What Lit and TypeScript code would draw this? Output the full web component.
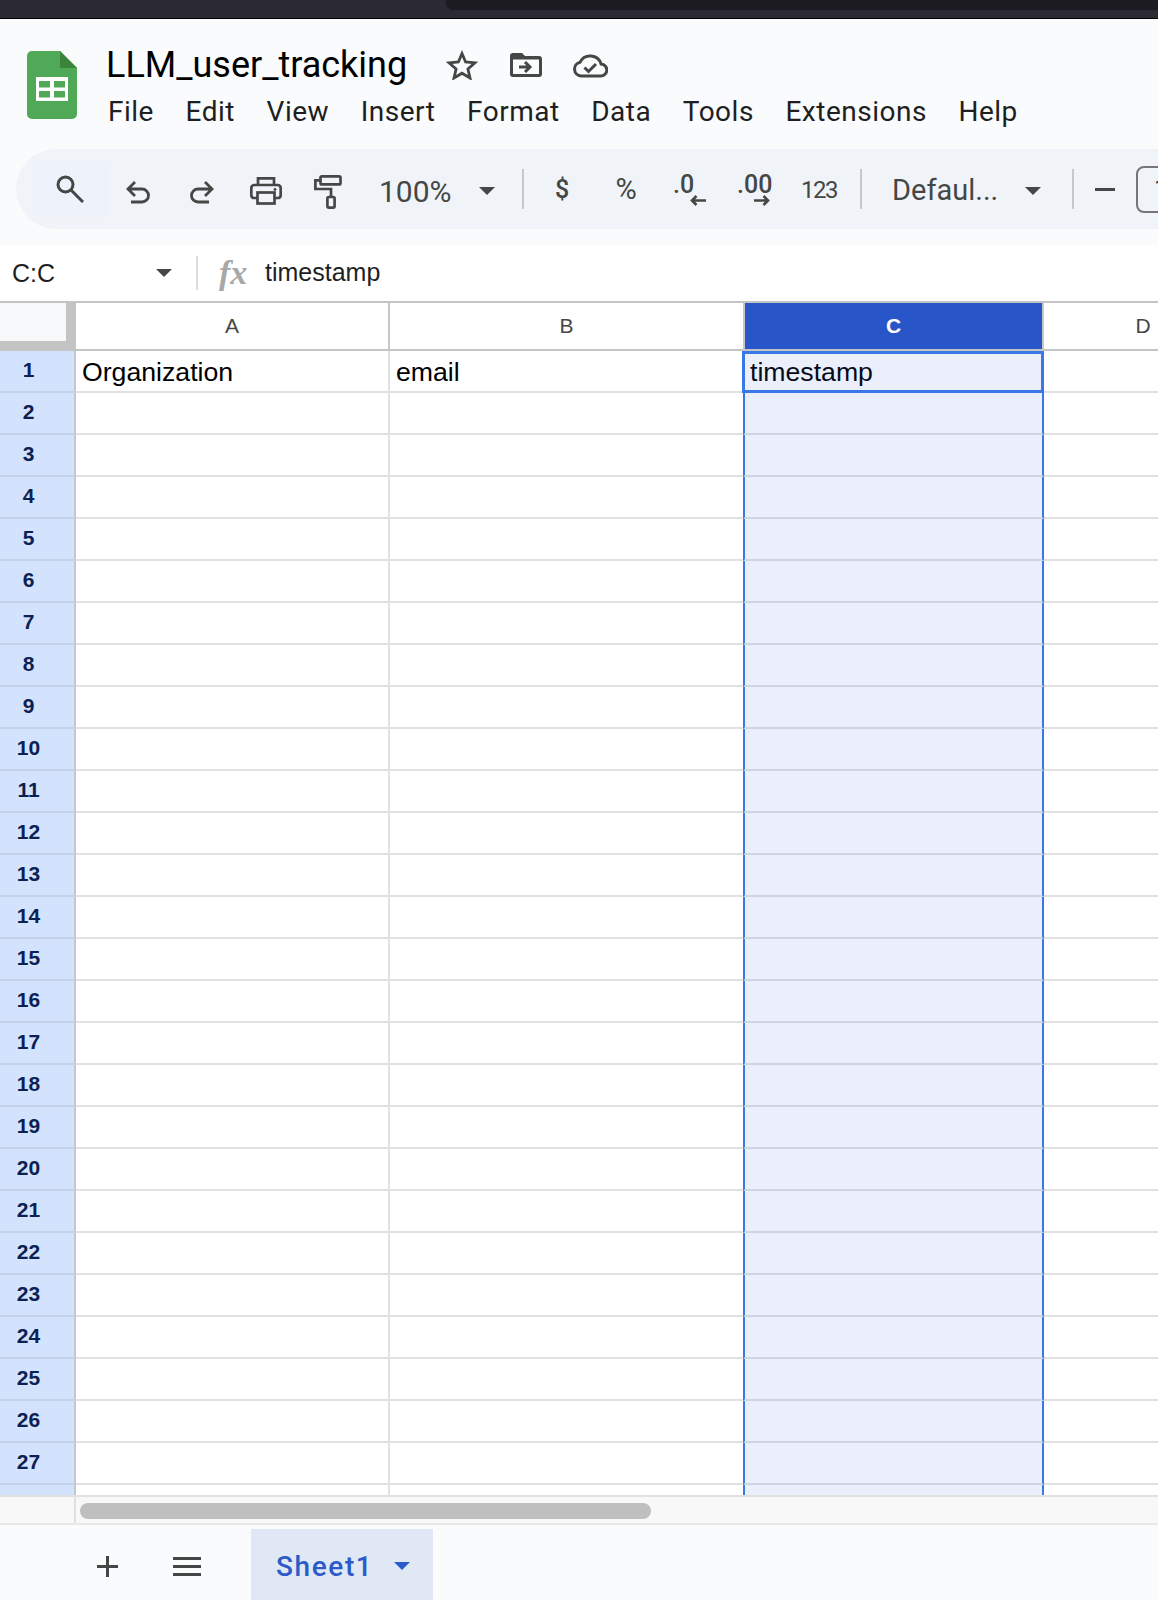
import { LitElement, css, html } from 'lit';

const MENU = ['File', 'Edit', 'View', 'Insert', 'Format', 'Data', 'Tools', 'Extensions', 'Help'];
const ROWS = Array.from({ length: 28 }, (_, i) => i + 1);
const CELLS: Record<number, string[]> = { 1: ['Organization', 'email', 'timestamp', ''] };
const COLS = ['a', 'b', 'c', 'd'];

export class AppRoot extends LitElement {
  static styles = css`
    :host {
      display: block;
      width: 1158px;
      height: 1600px;
      overflow: hidden;
      background: #fff;
      font-family: Roboto, "Liberation Sans", sans-serif;
    }
    .page { display: flex; flex-direction: column; height: 1600px; }
    svg { display: block; flex-shrink: 0; }

    .chrome { height: 18px; background: #2b2a33; border-bottom: 1px solid #000; padding-left: 446px; flex-shrink: 0; }
    .chrome-tab { height: 10px; background: #1c1b22; border-bottom-left-radius: 7px; }

    .head { height: 226px; background: #f9fbfd; flex-shrink: 0; display: flex; flex-direction: column; }
    .head-top { height: 130px; display: flex; }
    .logo { margin: 32px 0 0 27px; }
    .doc { margin-left: 29px; padding-top: 23px; }
    .title-row { display: flex; align-items: center; height: 46px; margin-bottom: 3px; }
    .title { width: 340px; font-size: 36px; line-height: 46px; color: #000; white-space: nowrap; }
    .folder { margin-left: 32px; }
    .cloud { margin-left: 30px; }
    .menu { display: flex; gap: 31.6px; padding-left: 2px; font-size: 28px; letter-spacing: 0.5px; line-height: 41px; color: #1f1f1f; }

    .toolbar {
      height: 80px;
      margin-left: 16px;
      padding-left: 18px;
      border-radius: 40px 0 0 40px;
      background: #f0f4f9;
      display: flex;
      align-items: center;
      overflow: hidden;
      color: #444746;
    }
    .toolbar > * { flex-shrink: 0; }
    .search { width: 74px; height: 56px; padding-right: 2px; box-sizing: border-box; background: #edf2fb; display: flex; align-items: center; justify-content: center; }
    .low { margin-top: 6px; }
    .undo { margin-left: 18px; }
    .redo { margin-left: 40px; }
    .print { margin-left: 36px; margin-top: 3px; }
    .roller { margin-left: 32px; margin-top: 5px; }
    .zoom { margin-left: 37px; width: 74px; font-size: 30px; margin-top: 4px; white-space: nowrap; }
    .sep { width: 2px; height: 40px; background: #c7c7c7; }
    .caret { width: 0; height: 0; margin-top: 3px; border-style: solid; border-width: 8px 8px 0; border-color: #444746 transparent transparent; }
    .car-zoom { margin-left: 26px; }
    .sep-1 { margin-left: 27px; }
    .dollar { margin-left: 31px; width: 14px; font-size: 25px; font-weight: 500; text-align: center; }
    .pct { margin-left: 45px; width: 24px; font-size: 29px; text-align: center; }
    .dec { display: flex; flex-direction: column; font-size: 25px; font-weight: 500; line-height: 22px; margin-top: 1px; }
    .dec svg { margin-top: -1px; }
    .dec-less { margin-left: 35px; width: 33px; }
    .dec-less svg { margin-left: 17px; }
    .dec-more { margin-left: 31px; width: 34px; }
    .dec-more svg { margin-left: 17px; }
    .num { margin-left: 30px; margin-top: 2px; width: 36px; font-size: 24px; letter-spacing: -1.5px; white-space: nowrap; }
    .sep-2 { margin-left: 23px; }
    .font { margin-left: 30px; margin-top: 1px; width: 105px; font-size: 29px; white-space: nowrap; }
    .car-font { margin-left: 28px; }
    .sep-3 { margin-left: 31px; }
    .minus { margin-left: 21px; width: 20px; height: 3px; background: #444746; }
    .size { margin-left: 21px; width: 60px; height: 47px; box-sizing: border-box; border: 2px solid #757575; border-radius: 8px; font-size: 26px; line-height: 43px; padding-left: 16px; }

    .formula { height: 56px; flex-shrink: 0; display: flex; align-items: center; background: #fff; color: #1f1f1f; }
    .name { width: 156px; padding-left: 12px; box-sizing: border-box; font: 25px "Liberation Sans", sans-serif; }
    .formula .caret { margin-top: 0; }
    .sep-f { width: 2px; height: 34px; margin-left: 24px; background: #dadce0; }
    .fx { margin-left: 21px; width: 46px; font: italic bold 34px "Liberation Serif", serif; color: #a8a8a8; }
    .value { font: 25px "Liberation Sans", sans-serif; padding-bottom: 1px; }

    .sheet { position: relative; flex: 1; overflow: hidden; font-family: "Liberation Sans", sans-serif; }
    .row { display: flex; height: 42px; }
    .row > * { flex-shrink: 0; }
    .row.top { height: 50px; box-sizing: border-box; border-top: 2px solid #c4c4c4; }
    .corner { width: 76px; box-sizing: border-box; background: #f8f9fa; border-right: 10px solid #c4c4c4; border-bottom: 10px solid #c4c4c4; }
    .rownum {
      width: 76px;
      box-sizing: border-box;
      padding: 0 17px 3px 0;
      background: #d3e3fd;
      border-right: 2px solid #c7c7c7;
      border-bottom: 2px solid #c5d1e6;
      display: flex;
      align-items: center;
      justify-content: center;
      font-size: 21px;
      font-weight: 700;
      color: #0b2153;
    }
    .a { width: 314px; }
    .b { width: 353px; }
    .c { width: 301px; }
    .d { width: 198px; }
    .colhead {
      box-sizing: border-box;
      border-right: 2px solid #c7c7c7;
      border-bottom: 2px solid #c4c4c4;
      display: flex;
      align-items: center;
      justify-content: center;
      font-size: 21px;
      color: #444746;
    }
    .colhead.c { background: #2856c8; color: #fff; font-weight: 700; border-left: 2px solid #c7c7c7; }
    .colhead.b { border-right: 0; }
    .colhead.d { border-right: 0; }
    .cell {
      box-sizing: border-box;
      padding: 2px 6px 0;
      border-right: 2px solid #e1e1e1;
      border-bottom: 2px solid #e1e1e1;
      display: flex;
      align-items: center;
      font-size: 26.67px;
      color: #000;
      white-space: nowrap;
    }
    .cell.b { border-right: 0; }
    .cell.d { border-right: 0; }
    .cell.c { background: #eaeffb; border-left: 2px solid #3b78e7; border-right: 2px solid #3b78e7; border-bottom-color: #cdd4e4; padding-left: 5px; color: #060b1a; }
    .active { position: absolute; left: 742px; top: 50px; width: 302px; height: 42px; box-sizing: border-box; border: 3.5px solid #3b78e7; pointer-events: none; }

    .scroll { height: 30px; flex-shrink: 0; box-sizing: border-box; background: #f8f8f8; border-top: 2px solid #e1e1e1; border-bottom: 2px solid #e8e8e8; display: flex; }
    .scroll-side { width: 76px; box-sizing: border-box; border-right: 2px solid #e1e1e1; }
    .thumb { width: 571px; height: 16px; margin: 6px 0 0 4px; border-radius: 8px; background: #bfbfbf; }

    .tabs { height: 75px; flex-shrink: 0; background: #f9fbfd; display: flex; align-items: flex-start; }
    .add { margin: 31px 0 0 97px; }
    .all { margin: 32px 0 0 55px; }
    .tab {
      margin: 4px 0 0 50px;
      width: 182px;
      height: 71px;
      box-sizing: border-box;
      padding: 3px 0 0 25px;
      background: #e1e8f5;
      display: flex;
      align-items: center;
      color: #2b5bc9;
      font-size: 28px;
      font-weight: 500;
      letter-spacing: 1.6px;
    }
    .tab .caret { margin: 0 0 0 21px; border-color: #2b5bc9 transparent transparent; }
  `;

  render() {
    return html`
      <div class="page">
        <div class="chrome"><div class="chrome-tab"></div></div>
        <div class="head">
          <div class="head-top">
            <svg class="logo" width="50" height="68" viewBox="0 0 50 68">
              <path d="M5 0H33L50 17V63a5 5 0 0 1-5 5H5a5 5 0 0 1-5-5V5a5 5 0 0 1 5-5z" fill="#4fa957" />
              <path d="M33 0L50 17H33z" fill="#3a8539" />
              <path d="M9 26H41V50H9zM12 30V36.500H23V30zM27 30V36.500H38V30zM12 40V46.500H23V40zM27 40V46.500H38V40z" fill="#fff" fill-rule="evenodd" />
            </svg>
            <div class="doc">
              <div class="title-row">
                <div class="title">LLM_user_tracking</div>
                <svg width="32" height="30" viewBox="0 0 32 30" fill="none" stroke="#444746" stroke-width="2.800">
                  <path d="M16 3.500L19.600 12 29 12.800 21.900 19 24 28 16 23.200 8 28 10.100 19 3 12.800 12.400 12z" />
                </svg>
                <svg class="folder" width="32" height="24" viewBox="0 0 32 24">
                  <path fill="#444746" fill-rule="evenodd" d="M3 0H12L15 3H29a3 3 0 0 1 3 3V21a3 3 0 0 1-3 3H3a3 3 0 0 1-3-3V3a3 3 0 0 1 3-3zM3 6.500V21H29V6.500z" />
                  <path fill="none" stroke="#444746" stroke-width="3" d="M9 14H19M15 9L20 14 15 19" />
                </svg>
                <svg class="cloud" width="36" height="25" viewBox="0 0 36 25" fill="none" stroke="#444746" stroke-width="3">
                  <path d="M9 23H28.500a6 6 0 0 0 .6-12A11.500 11.500 0 0 0 8 9.200 7 7 0 0 0 9 23z" />
                  <path d="M12.500 14.500L16.500 18.500 24 11" />
                </svg>
              </div>
              <div class="menu">${MENU.map((m) => html`<span>${m}</span>`)}</div>
            </div>
          </div>
          <div class="toolbar">
            <div class="search">
              <svg width="28" height="28" viewBox="0 0 28 28" fill="none" stroke="#444746" stroke-width="3">
                <circle cx="9.500" cy="9.500" r="7.500" />
                <path d="M15 15L27 27" />
              </svg>
            </div>
            <svg class="undo low" width="24" height="23" viewBox="0 0 24 23" fill="none" stroke="#444746" stroke-width="2.800">
              <path d="M9 1L2 8 9 15M2 8H16A6.500 6.500 0 0 1 16 21H5" />
            </svg>
            <svg class="redo low" width="24" height="23" viewBox="0 0 24 23" fill="none" stroke="#444746" stroke-width="2.800">
              <path d="M15 1L22 8 15 15M22 8H8A6.500 6.500 0 0 0 8 21H19" />
            </svg>
            <svg class="print" width="32" height="28" viewBox="0 0 32 28" fill="none" stroke="#444746" stroke-width="2.700">
              <path d="M8 8V1.400H24V8M7.500 21H4a2.700 2.700 0 0 1-2.700-2.700V11A3 3 0 0 1 4.300 8H27.700a3 3 0 0 1 3 3V18.300A2.700 2.700 0 0 1 28 21H24.500" />
              <rect x="7.500" y="15.500" width="17" height="11" />
              <circle cx="25" cy="12.500" r="1.400" fill="#444746" stroke="none" />
            </svg>
            <svg class="roller" width="28" height="34" viewBox="0 0 28 34" fill="none" stroke="#444746" stroke-width="2.700">
              <rect x="6.500" y="1.400" width="20" height="8" rx="1.500" />
              <path d="M6.500 5.400H1.400V14H17V22" />
              <rect x="13.400" y="22" width="7.200" height="10.600" rx="1.500" />
            </svg>
            <div class="zoom">100%</div>
            <div class="caret car-zoom"></div>
            <div class="sep sep-1"></div>
            <div class="dollar">$</div>
            <div class="pct">%</div>
            <div class="dec dec-less">
              <span>.0</span>
              <svg width="16" height="11" viewBox="0 0 16 11" fill="none" stroke="#444746" stroke-width="2.600"><path d="M16 5.500H2M6.500 1L2 5.500 6.500 10" /></svg>
            </div>
            <div class="dec dec-more">
              <span>.00</span>
              <svg width="16" height="11" viewBox="0 0 16 11" fill="none" stroke="#444746" stroke-width="2.600"><path d="M0 5.500H14M9.500 1L14 5.500 9.500 10" /></svg>
            </div>
            <div class="num">123</div>
            <div class="sep sep-2"></div>
            <div class="font">Defaul...</div>
            <div class="caret car-font"></div>
            <div class="sep sep-3"></div>
            <div class="minus"></div>
            <div class="size">10</div>
          </div>
        </div>
        <div class="formula">
          <div class="name">C:C</div>
          <div class="caret"></div>
          <div class="sep-f"></div>
          <div class="fx">fx</div>
          <div class="value">timestamp</div>
        </div>
        <div class="sheet">
          <div class="row top">
            <div class="corner"></div>
            ${COLS.map((c) => html`<div class="colhead ${c}">${c.toUpperCase()}</div>`)}
          </div>
          ${ROWS.map(
            (r) => html`
              <div class="row">
                <div class="rownum">${r < 28 ? r : ''}</div>
                ${COLS.map((c, i) => html`<div class="cell ${c}">${CELLS[r]?.[i] ?? ''}</div>`)}
              </div>
            `
          )}
          <div class="active"></div>
        </div>
        <div class="scroll">
          <div class="scroll-side"></div>
          <div class="thumb"></div>
        </div>
        <div class="tabs">
          <svg class="add" width="21" height="21" viewBox="0 0 21 21" fill="none" stroke="#444746" stroke-width="3"><path d="M10.500 0V21M0 10.500H21" /></svg>
          <svg class="all" width="28" height="19" viewBox="0 0 28 19" fill="none" stroke="#444746" stroke-width="3"><path d="M0 1.500H28M0 9.500H28M0 17.500H28" /></svg>
          <div class="tab">Sheet1<div class="caret"></div></div>
        </div>
      </div>
    `;
  }
}
customElements.define('app-root', AppRoot);
